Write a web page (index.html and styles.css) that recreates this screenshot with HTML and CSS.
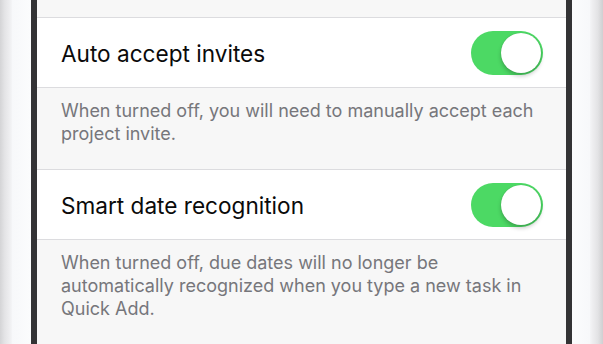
FILE: index.html
```html
<!DOCTYPE html>
<html>
<head>
<meta charset="utf-8">
<link rel="stylesheet" href="styles.css">
</head>
<body>
<div class="device">
  <div class="frame frame-left">
    <div class="rim rim-left"></div>
    <div class="body-edge"></div>
    <div class="bezel"></div>
  </div>
  <div class="screen">
    <div class="top-gap"></div>
    <div class="row">
      <span class="row-title">Auto accept invites</span>
      <span class="toggle on"><span class="knob"></span></span>
    </div>
    <div class="footer">When turned off, you will need to manually accept each project invite.</div>
    <div class="row">
      <span class="row-title">Smart date recognition</span>
      <span class="toggle on"><span class="knob"></span></span>
    </div>
    <div class="footer footer-last">When turned off, due dates will no longer be automatically recognized when you type a new task in Quick Add.</div>
  </div>
  <div class="frame frame-right">
    <div class="bezel"></div>
    <div class="body-edge"></div>
    <div class="rim rim-right"></div>
  </div>
</div>
</body>
</html>
```
FILE: styles.css
```css
html, body {
  margin: 0;
  padding: 0;
  height: 344px;
  overflow: hidden;
  background: #f6f7f9;
}
.device {
  display: flex;
  height: 344px;
  width: 603px;
}
.frame {
  display: flex;
  flex: 0 0 37px;
  height: 100%;
}
.rim {
  flex: 0 0 12px;
}
.rim-left {
  background: linear-gradient(to right, #d4d4d6 0%, #e4e4e6 40%, #eeeef0 80%, #f4f5f7 100%);
}
.rim-right {
  flex-basis: 13px;
  background: linear-gradient(to left, #cfcfd1 0%, #e3e3e5 40%, #eeeef0 80%, #f4f5f7 100%);
}
.body-edge {
  flex: 1 1 auto;
  background: linear-gradient(to right, #f7f8fa, #fbfcfd);
}
.frame-right .body-edge {
  background: linear-gradient(to left, #f7f8fa, #fbfcfd);
}
.bezel {
  flex: 0 0 6px;
  background: #333335;
}
.screen {
  flex: 0 0 529px;
  background: #f7f7f7;
  font-family: Inter, "Liberation Sans", Arial, sans-serif;
}
.top-gap {
  height: 18px;
  border-bottom: 1px solid #dcdcdf;
  box-sizing: border-box;
}
.row {
  display: flex;
  align-items: center;
  justify-content: space-between;
  height: 70px;
  box-sizing: border-box;
  background: #ffffff;
  border-bottom: 1px solid #dcdcdf;
  padding: 1px 23px 0 24px;
}
.row-title {
  font-size: 22.6px;
  color: #0a0a0a;
  letter-spacing: 0;
}
.toggle {
  position: relative;
  display: block;
  width: 72px;
  height: 44px;
  border-radius: 22px;
  background: #4cd964;
  flex: 0 0 auto;
}
.knob {
  position: absolute;
  top: 2px;
  right: 2px;
  width: 40px;
  height: 40px;
  border-radius: 50%;
  background: #fff;
  box-shadow: 0 3px 4px rgba(0,0,0,0.22), 0 0 1px rgba(0,0,0,0.2);
}
.footer {
  background: #f7f7f7;
  color: #76767b;
  font-size: 18px;
  line-height: 23px;
  padding: 11px 24px 25px 24px;
  border-bottom: 1px solid #dcdcdf;
  box-sizing: border-box;
  height: 82px;
}
.footer-last {
  border-bottom: none;
  height: auto;
}
```
